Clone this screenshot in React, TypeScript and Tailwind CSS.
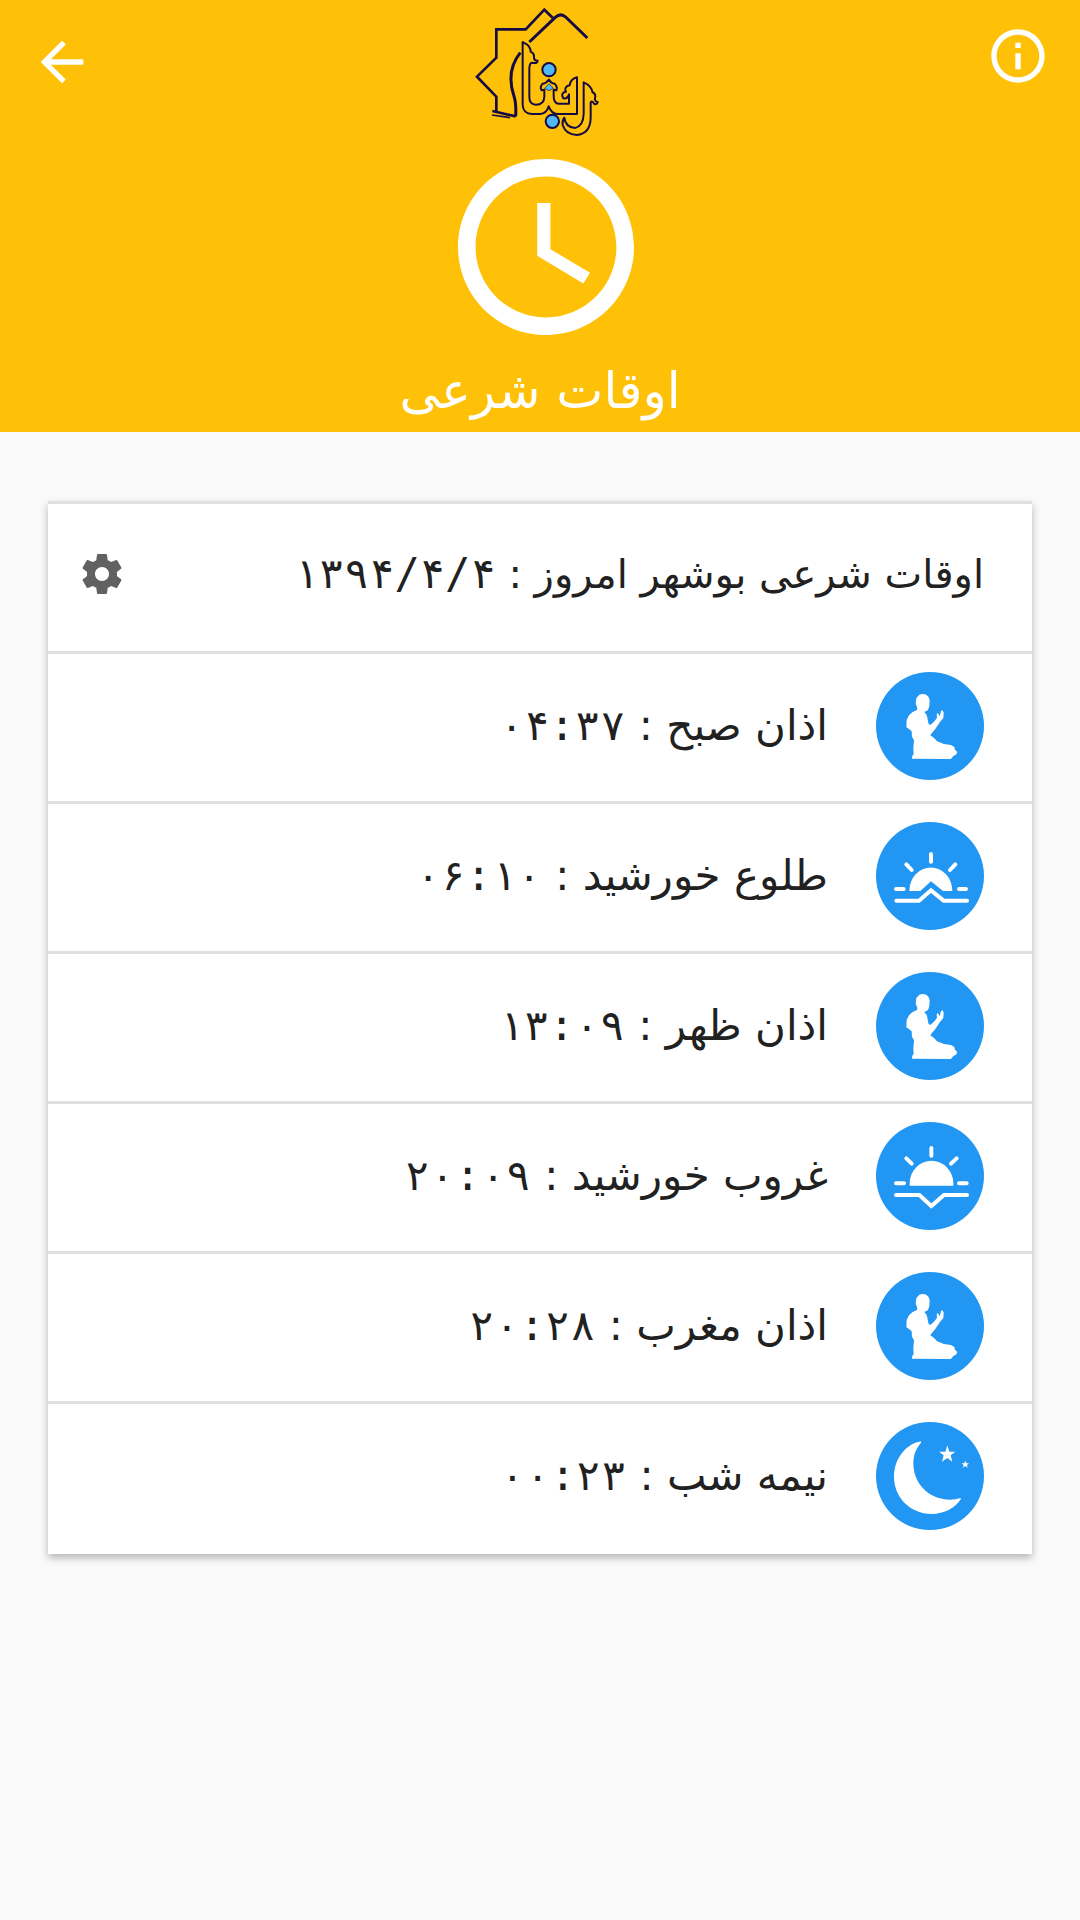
import { FC, ReactNode } from "react";

type TPrayerTime = {
  id: string;
  label: string;
  time: string;
  icon: ReactNode;
};

const PrayerIcon: FC = () => (
  <svg viewBox="0 0 324 324" className="w-full h-full" fill="#fff" aria-hidden="true">
    <path d="M130 68 Q140 64 151 68 Q160 74 161 84 L160 101 Q158 115 149 118 L145 120 Q154 128 155 143 L158 157 L164 158 L176 147 L183 137 L182 128 L184 123 L188 127 L191 133 L195 117 L200 115 L203 122 L202 138 L192 150 L178 171 L166 185 L163 190 L175 199 L183 208 L204 216 L225 219 L235 225 L237 233 L244 240 L240 248 L232 252 L225 261 L108 260 L109 251 L113 246 L112 230 L114 205 L108 194 L107 178 L98 170 L91 166 L92 144 L99 130 L109 121 L124 113 L123 104 L119 96 L121 78 Z" />
  </svg>
);

const SunriseIcon: FC = () => (
  <svg viewBox="0 0 324 324" className="w-full h-full" fill="none" stroke="#fff" strokeWidth="12" strokeLinecap="round" aria-hidden="true">
    <path d="M100 207 A64 70 0 0 1 229 207 H201 L165 178 L133 207 Z" fill="#fff" stroke="none" />
    <path d="M165 96 V119 M91 127 L107 144 M238 127 L222 144 M60 201 H83 M249 201 H270" />
    <path d="M61 236 H129 L165 205 L203 236 H273" />
  </svg>
);

const SunsetIcon: FC = () => (
  <svg viewBox="0 0 324 324" className="w-full h-full" fill="none" stroke="#fff" strokeWidth="12" strokeLinecap="round" aria-hidden="true">
    <path d="M101 191 V184 A65 67 0 0 1 232 184 V191 Z" fill="#fff" stroke="none" />
    <path d="M166 78 V101 M91 109 L107 125 M242 109 L225 125 M60 184 H84 M249 184 H272" />
    <path d="M60 219 H130 L166 252 L204 219 H273" />
  </svg>
);

const MoonIcon: FC = () => (
  <svg viewBox="0 0 324 324" className="w-full h-full" fill="#fff" aria-hidden="true">
    <path d="M135 58 C88 66 54 112 54 165 C54 227 104 276 166 276 C205 276 239 258 256 229 C249 227 242 232 223 233 C160 234 112 186 112 124 C112 91 126 74 135 62 Z" />
    <path d="M214 70 L220 89 L238 89 L224 100 L229 119 L214 108 L198 119 L203 100 L189 89 L208 89 Z" />
    <path d="M268 116 L271 124 L279 124 L273 129 L275 137 L268 132 L261 137 L263 129 L257 124 L265 124 Z" />
  </svg>
);

const times: TPrayerTime[] = [
  { id: "fajr", label: "اذان صبح", time: "۰۴:۳۷", icon: <PrayerIcon /> },
  { id: "sunrise", label: "طلوع خورشید", time: "۰۶:۱۰", icon: <SunriseIcon /> },
  { id: "dhuhr", label: "اذان ظهر", time: "۱۳:۰۹", icon: <PrayerIcon /> },
  { id: "sunset", label: "غروب خورشید", time: "۲۰:۰۹", icon: <SunsetIcon /> },
  { id: "maghrib", label: "اذان مغرب", time: "۲۰:۲۸", icon: <PrayerIcon /> },
  { id: "midnight", label: "نیمه شب", time: "۰۰:۲۳", icon: <MoonIcon /> },
];

const Logo: FC = () => (
  <svg viewBox="0 0 480 435" className="w-40 h-[145px]" fill="none" stroke="#160a45" role="img" aria-label="ربنا">
    {/* star outline */}
    <path strokeWidth="8" d="M278 53 L253 29 L197 88 H109 V173 L51 230 L109 290 V333" />
    <path strokeWidth="9" d="M208 126 L285 53 Q302 37 317 51 L382 114" />
    <path strokeWidth="9" d="M181 158 C148 199 148 247 162 289 Q169 309 167 349" />
    <path strokeWidth="8" d="M97 333 L167 349" />
    <path strokeWidth="5" d="M96 345 L150 353" />
    {/* lettering */}
    <g strokeWidth="6" strokeLinejoin="round">
      <path d="M188 126 V315 Q190 342 216 342 H240 Q260 341 266 319 Q275 342 292 342 H351 V232 C336 236 330 248 329 256 C316 258 313 268 318 275 C307 276 303 285 310 295 Q322 298 327 283 V311 H298 Q281 312 281 288 V269 L289 271 Q294 262 284 251 Q273 250 267 239 Q259 250 248 251 Q238 262 245 271 L253 269 V290 Q252 314 228 314 Q208 314 208 291 V204 Q209 185 220 189 Q232 191 233 182 Q222 182 222 173 Q224 161 212 155 Q211 137 195 130 Z" />
      <path d="M371 247 V342 Q370 378 345 384 Q316 382 313 353 Q306 362 308 375 Q317 403 350 405 Q391 401 392 354 V309 Q394 298 403 312 Q412 314 413 306 Q403 304 405 294 Q409 282 397 276 Q395 258 371 247 Z" />
      <circle cx="267" cy="209" r="20" fill="#50b8f4" />
      <circle cx="277" cy="364" r="20" fill="#50b8f4" />
    </g>
    <path d="M267 251 L280 265 L267 272 L254 265 Z" fill="#50b8f4" strokeWidth="2" />
  </svg>
);

const Header: FC = () => (
  <header className="flex items-start justify-between bg-[#ffc107] text-white px-[30px] h-[432px]">
    <button type="button" aria-label="بازگشت" className="mt-[30px]">
      <svg viewBox="0 0 24 24" className="w-16 h-16" fill="currentColor" aria-hidden="true">
        <path d="M20 11H7.830l5.590-5.590L12 4l-8 8 8 8 1.410-1.410L7.830 13H20v-2z" />
      </svg>
    </button>
    <div className="flex flex-col items-center">
      <Logo />
      <svg viewBox="2 2 20 20" className="w-44 h-44 mt-[14px] ml-3" fill="currentColor" aria-hidden="true">
        <path d="M11.990 2C6.470 2 2 6.480 2 12s4.470 10 9.990 10C17.520 22 22 17.520 22 12S17.520 2 11.990 2zM12 20c-4.420 0-8-3.580-8-8s3.580-8 8-8 8 3.580 8 8-3.580 8-8 8z" />
        <path d="M12.500 7H11v6l5.250 3.150.75-1.230-4.500-2.670z" />
      </svg>
      <h1 dir="rtl" className="text-[50px] leading-[72px] font-medium mt-5">اوقات شرعی</h1>
    </div>
    <button type="button" aria-label="درباره" className="mt-6">
      <svg viewBox="0 0 24 24" className="w-16 h-16" fill="currentColor" aria-hidden="true">
        <path d="M11 17h2v-6h-2v6zm1-15C6.480 2 2 6.480 2 12s4.480 10 10 10 10-4.480 10-10S17.520 2 12 2zm0 18c-4.410 0-8-3.590-8-8s3.590-8 8-8 8 3.590 8 8-3.590 8-8 8zM11 9h2V7h-2v2z" />
      </svg>
    </button>
  </header>
);

const Digits: FC<{ value: string }> = ({ value }) => (
  <span className="font-['DejaVu_Sans_Mono','DejaVu_Sans',monospace] text-[42px]">{value}</span>
);

const PrayerRow: FC<{ item: TPrayerTime }> = ({ item }) => (
  <li className="flex items-center gap-12 border-t-3 border-[#e0e0e0] px-12 pt-[18px] pb-[21px]">
    <div className="w-[108px] h-[108px] shrink-0 rounded-full bg-[#2196f3]">{item.icon}</div>
    <p className="text-[42px]">
      {item.label} : <Digits value={item.time} />
    </p>
  </li>
);

export default function App() {
  return (
    <div className="min-h-screen bg-[#fafafa] font-['DejaVu_Sans',sans-serif]">
      <Header />
      <main
        dir="rtl"
        className="mx-12 mt-[69px] bg-white text-[#212121] text-[40px] leading-[60px] pb-[3px] shadow-[0_4px_8px_rgba(0,0,0,0.28)]"
      >
        <div className="flex items-center justify-between border-t-3 border-[#e0e0e0] h-[150px] pr-12 pl-[30px] pb-2">
          <h2>
            اوقات شرعی بوشهر امروز : <Digits value="۱۳۹۴/۴/۴" />
          </h2>
          <button type="button" aria-label="تنظیمات" className="text-[#616161]">
            <svg viewBox="0 0 24 24" className="w-12 h-12" fill="currentColor" aria-hidden="true">
              <path d="M19.430 12.980c.04-.32.07-.64.07-.98s-.03-.66-.07-.98l2.110-1.650c.19-.15.24-.42.12-.64l-2-3.460c-.12-.22-.39-.3-.61-.22l-2.490 1c-.52-.4-1.080-.73-1.690-.98l-.38-2.650C14.460 2.180 14.250 2 14 2h-4c-.25 0-.46.18-.49.42l-.38 2.650c-.61.25-1.170.59-1.690.98l-2.490-1c-.23-.09-.49 0-.61.22l-2 3.460c-.13.22-.07.49.12.64l2.110 1.650c-.04.32-.07.65-.07.98s.03.66.07.98l-2.110 1.650c-.19.15-.24.42-.12.64l2 3.460c.12.22.39.3.61.22l2.490-1c.52.4 1.080.73 1.690.98l.38 2.650c.03.24.24.42.49.42h4c.25 0 .46-.18.49-.42l.38-2.650c.61-.25 1.170-.59 1.690-.98l2.490 1c.23.09.49 0 .61-.22l2-3.460c.12-.22.07-.49-.12-.64l-2.110-1.650zM12 15.500c-1.930 0-3.500-1.570-3.500-3.500s1.570-3.500 3.500-3.500 3.500 1.570 3.500 3.500-1.570 3.500-3.500 3.500z" />
            </svg>
          </button>
        </div>
        <ul>
          {times.map((item) => (
            <PrayerRow key={item.id} item={item} />
          ))}
        </ul>
      </main>
    </div>
  );
}
